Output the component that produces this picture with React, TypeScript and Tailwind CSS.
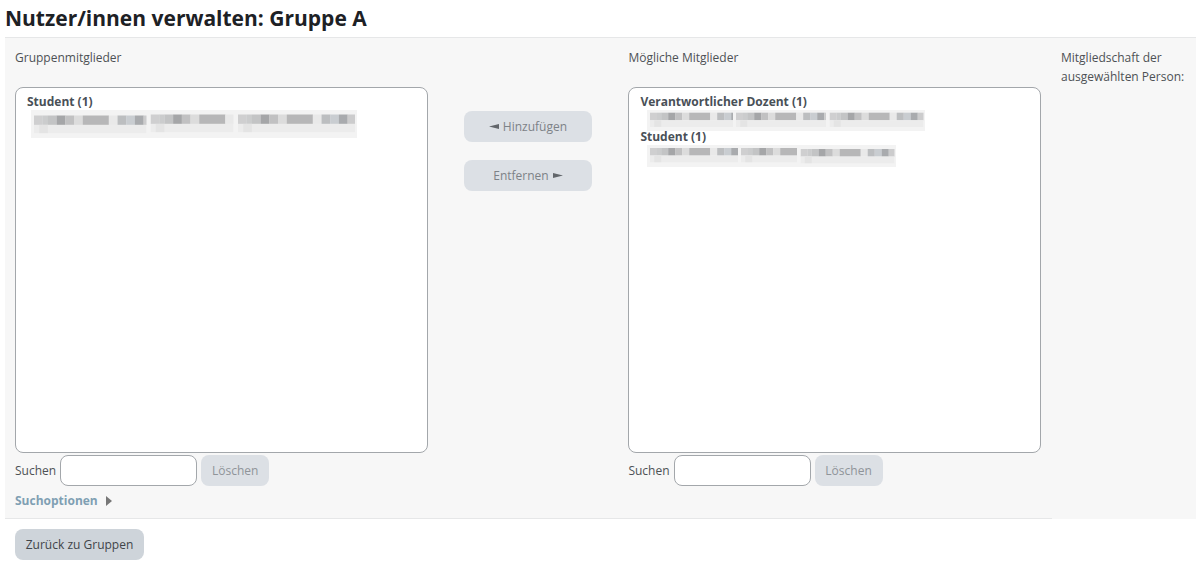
import React, { useState } from "react";

interface Block {
  x: number;
  y?: number;
  width: number;
}

interface MaskedName {
  width: number;
  height: number;
  cell: number;
  barTop: number;
  blocks: Block[];
}

interface MemberGroup {
  role: string;
  masked: MaskedName;
}

// [width in cells, colour] of one masked word
const CELLS: [number, string][] = [
  [1, "#cfcfd0"],
  [0.6, "#cbcccd"],
  [1, "#c3c4c5"],
  [1, "#a5a6a8"],
  [1, "#c1c1c2"],
  [1, "#dcdcdc"],
  [3, "#b7b7b8"],
  [1, "#e9e9e9"],
  [1, "#bcbec0"],
  [1, "#c9cdd1"],
  [1, "#a9abae"],
  [2, "#cccccd"],
];

const groupMembers: MemberGroup[] = [
  {
    role: "Student (1)",
    masked: {
      width: 326,
      height: 28,
      cell: 8.7,
      barTop: 5.5,
      blocks: [
        { x: 3, width: 112.5 },
        { x: 119.5, y: -1, width: 83 },
        { x: 207, y: -1, width: 117 },
      ],
    },
  },
];

const possibleMembers: MemberGroup[] = [
  {
    role: "Verantwortlicher Dozent (1)",
    masked: {
      width: 278,
      height: 21,
      cell: 7,
      barTop: 2.7,
      blocks: [
        { x: 3, width: 83 },
        { x: 89, width: 90 },
        { x: 182.5, width: 94 },
      ],
    },
  },
  {
    role: "Student (1)",
    masked: {
      width: 249,
      height: 22,
      cell: 7,
      barTop: 3,
      blocks: [
        { x: 3, width: 88 },
        { x: 94, width: 56 },
        { x: 153.5, y: 1, width: 94 },
      ],
    },
  },
];

function MaskedText({ masked }: { masked: MaskedName }) {
  const { width, height, cell, barTop, blocks } = masked;
  return (
    <svg width={width} height={height} className="block shrink-0" aria-hidden="true">
      <rect width={width} height={height} fill="#f3f3f3" />
      {blocks.map((block, i) => {
        const top = barTop + (block.y ?? 0);
        let x = 0;
        return (
          <svg key={i} x={block.x} width={block.width} height={height}>
            {CELLS.map(([size, color], j) => {
              const left = x;
              x += size * cell;
              return (
                <rect key={j} x={left} y={top} width={size * cell + 0.1} height={cell * 1.08} fill={color} />
              );
            })}
            <rect y={top + cell * 1.08} width={block.width} height={cell * 0.95} fill="#ececec" />
            <rect x={cell * 0.6} y={top + cell * 1.08} width={cell} height={cell * 0.95} fill="#e4e4e4" />
          </svg>
        );
      })}
    </svg>
  );
}

function MemberList({ labelId, groups, indent }: { labelId: string; groups: MemberGroup[]; indent: string }) {
  return (
    <div
      role="listbox"
      aria-labelledby={labelId}
      tabIndex={0}
      className="h-[366px] rounded-lg border border-[#a3a7ab] bg-white px-[11px] py-[5px]"
    >
      {groups.map((group) => (
        <div key={group.role} role="group" aria-label={group.role}>
          <div className="font-bold leading-[17px] text-[#495057]">{group.role}</div>
          <div role="option" aria-selected="false" className={`h-[18px] ${indent}`}>
            <MaskedText masked={group.masked} />
          </div>
        </div>
      ))}
    </div>
  );
}

function SearchRow({ id }: { id: string }) {
  const [value, setValue] = useState("");

  return (
    <div className="mt-0.5 flex items-center gap-1">
      <label htmlFor={id}>Suchen</label>
      <input
        id={id}
        type="text"
        value={value}
        onChange={(e) => setValue(e.target.value)}
        className="h-[31px] w-[137px] rounded-lg border border-[#a3a7ab] bg-white px-2"
      />
      <button
        type="button"
        disabled={!value}
        onClick={() => setValue("")}
        className="h-[31px] w-[68px] rounded-lg bg-[#dce0e5] text-[#8f9499]"
      >
        Löschen
      </button>
    </div>
  );
}

export default function App() {
  return (
    <div className="pb-4 pl-[5px] pr-1 font-['Open_Sans','Noto_Sans',sans-serif] text-[12px] leading-[19px] text-[#4d5155]">
      <h1 className="pb-[5px] pt-1 text-[21px] font-bold leading-[28px] text-[#1d2125]">
        Nutzer/innen verwalten: Gruppe A
      </h1>

      <div className="flex bg-[#f7f7f7]">
        <div className="grid flex-1 grid-cols-[413fr_201fr_413fr] border-y border-[#e6e7e8] pb-2 pl-2.5 pr-[11px] pt-2.5">
          <div>
            <p id="members-label" className="mb-5">
              Gruppenmitglieder
            </p>
            <MemberList labelId="members-label" groups={groupMembers} indent="pl-1" />
            <SearchRow id="search-members" />
            <button type="button" className="mt-[5px] flex items-center gap-2 font-bold text-[#7f9fb3]">
              Suchoptionen
              <svg width="6" height="10" viewBox="0 0 6 10" aria-hidden="true">
                <path d="M0 0L6 5L0 10Z" fill="#777777" />
              </svg>
            </button>
          </div>

          <div className="flex flex-col items-center gap-[18px] pt-[63px]">
            <button
              type="button"
              disabled
              className="flex h-[31px] w-32 items-center justify-center gap-1 rounded-lg bg-[#dce0e5] text-[#7d8287]"
            >
              <svg width="10" height="5" viewBox="0 0 10 5" aria-hidden="true">
                <path d="M0 2.5L10 0V5Z" fill="#62666b" />
              </svg>
              Hinzufügen
            </button>
            <button
              type="button"
              disabled
              className="flex h-[31px] w-32 items-center justify-center gap-1 rounded-lg bg-[#dce0e5] text-[#7d8287]"
            >
              Entfernen
              <svg width="10" height="5" viewBox="0 0 10 5" aria-hidden="true">
                <path d="M10 2.5L0 0V5Z" fill="#62666b" />
              </svg>
            </button>
          </div>

          <div>
            <p id="possible-label" className="mb-5">
              Mögliche Mitglieder
            </p>
            <MemberList labelId="possible-label" groups={possibleMembers} indent="pl-[7px]" />
            <SearchRow id="search-possible" />
          </div>
        </div>

        <div className="w-36 border-t border-[#e6e7e8] pl-[9px] pt-2.5">
          <p>Mitgliedschaft der ausgewählten Person:</p>
        </div>
      </div>

      <button
        type="button"
        className="ml-2.5 mt-2.5 h-[31px] w-[129px] rounded-lg bg-[#ced4da] text-[#3f4449]"
      >
        Zurück zu Gruppen
      </button>
    </div>
  );
}
